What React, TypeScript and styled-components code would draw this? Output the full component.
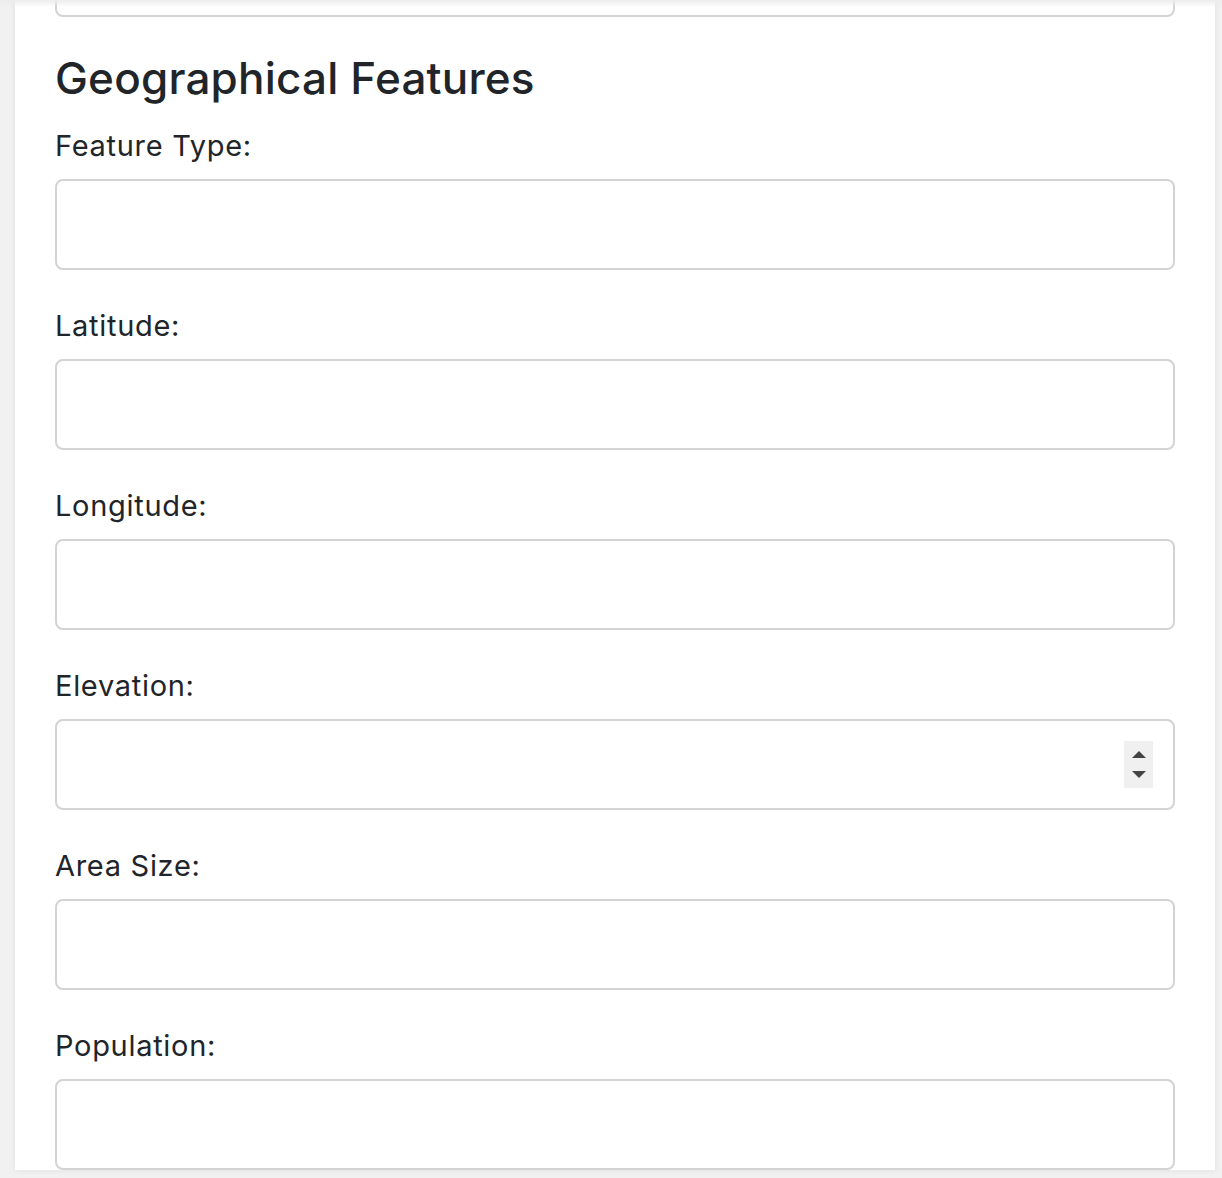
import styled, { createGlobalStyle } from "styled-components";

const GlobalStyle = createGlobalStyle`
  html, body {
    margin: 0;
    padding: 0;
    background: #f1f1f1;
    font-family: Inter, "Noto Sans", "Liberation Sans", sans-serif;
    color: #212529;
  }
`;

const fields = [
  { id: "featureType", label: "Feature Type:" },
  { id: "latitude", label: "Latitude:" },
  { id: "longitude", label: "Longitude:" },
  { id: "elevation", label: "Elevation:", stepper: true },
  { id: "areaSize", label: "Area Size:" },
  { id: "population", label: "Population:" },
];

export default function App() {
  return (
    <>
      <GlobalStyle />
      <Page>
        <TopShade />
        <Card>
          <FieldTail />
          <Heading>Geographical Features</Heading>
          {fields.map((f) => (
            <Group key={f.id}>
              <Label htmlFor={f.id}>{f.label}</Label>
              <InputWrap>
                <TextInput id={f.id} type="text" />
                {f.stepper && (
                  <Stepper>
                    <ArrowUp />
                    <ArrowDown />
                  </Stepper>
                )}
              </InputWrap>
            </Group>
          ))}
        </Card>
      </Page>
    </>
  );
}

const Page = styled.div`
  position: relative;
  height: 1178px;
  overflow: hidden;
  padding: 0 7px 0 15px;
`;

const TopShade = styled.div`
  position: absolute;
  top: 0;
  left: 0;
  right: 0;
  height: 7px;
  background: linear-gradient(#ececec, rgba(255, 255, 255, 0));
  z-index: 2;
`;

const Card = styled.div`
  background: #ffffff;
  width: 1200px;
  box-sizing: border-box;
  padding: 0 40px;
  height: 1170px;
  overflow: hidden;
  box-shadow: 0 0 6px rgba(0, 0, 0, 0.08);
`;

const FieldTail = styled.div`
  height: 15px;
  border: 2px solid #d3d3d3;
  border-top: none;
  border-radius: 0 0 8px 8px;
`;

const Heading = styled.h2`
  margin: 35px 0 20px;
  font-size: 44px;
  font-weight: 500;
  line-height: 53px;
  letter-spacing: 0.2px;
`;

const Group = styled.div`
  margin-bottom: 35px;
`;

const Label = styled.label`
  display: block;
  font-size: 29px;
  line-height: 42px;
  letter-spacing: 0.7px;
  margin-bottom: 12px;
`;

const InputWrap = styled.div`
  position: relative;
`;

const TextInput = styled.input`
  display: block;
  width: 100%;
  height: 91px;
  box-sizing: border-box;
  border: 2px solid #d3d3d3;
  border-radius: 8px;
  background: #fff;
  font-size: 28px;
  padding: 0 20px;
  outline: none;
`;

const Stepper = styled.span`
  position: absolute;
  right: 22px;
  top: 22px;
  width: 29px;
  height: 47px;
  background: #f0f0f0;
  display: flex;
  flex-direction: column;
  align-items: center;
  justify-content: center;
  gap: 13px;
`;

const ArrowUp = styled.span`
  width: 0;
  height: 0;
  border-left: 7px solid transparent;
  border-right: 7px solid transparent;
  border-bottom: 7px solid #444;
`;

const ArrowDown = styled.span`
  width: 0;
  height: 0;
  border-left: 7px solid transparent;
  border-right: 7px solid transparent;
  border-top: 7px solid #444;
`;
